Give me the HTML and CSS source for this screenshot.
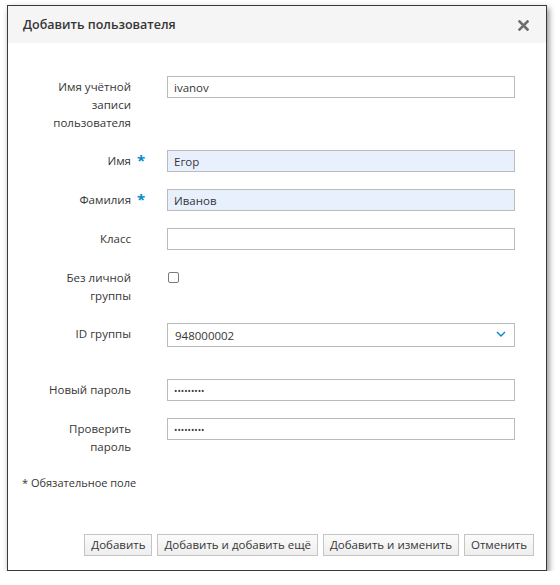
FILE: index.html
```html
<!DOCTYPE html>
<html lang="ru">
<head>
<meta charset="utf-8">
<title>Добавить пользователя</title>
<link rel="stylesheet" href="styles.css">
</head>
<body>
<div class="dialog">
  <div class="dialog-header">
    <span class="dialog-title">Добавить пользователя</span>
    <svg class="close" width="11" height="11" viewBox="0 0 11 11" aria-label="Закрыть">
      <path d="M1.5 1.5 L9.5 9.5 M9.5 1.5 L1.5 9.5" stroke="#6e6e6e" stroke-width="2.6" stroke-linecap="square"/>
    </svg>
  </div>
  <div class="dialog-body">
    <div class="row">
      <div class="label">Имя учётной записи пользователя</div>
      <div class="req"></div>
      <div class="field"><input class="text" type="text" value="ivanov" readonly></div>
    </div>
    <div class="row">
      <div class="label">Имя</div>
      <div class="req">*</div>
      <div class="field"><input class="text filled" type="text" value="Егор" readonly></div>
    </div>
    <div class="row">
      <div class="label">Фамилия</div>
      <div class="req">*</div>
      <div class="field"><input class="text filled" type="text" value="Иванов" readonly></div>
    </div>
    <div class="row">
      <div class="label">Класс</div>
      <div class="req"></div>
      <div class="field"><input class="text" type="text" value="" readonly></div>
    </div>
    <div class="row">
      <div class="label">Без личной группы</div>
      <div class="req"></div>
      <div class="field field-check"><input class="check" type="checkbox"></div>
    </div>
    <div class="row row-spaced">
      <div class="label">ID группы</div>
      <div class="req"></div>
      <div class="field">
        <div class="select">
          <span>948000002</span>
          <svg class="chevron" width="10" height="6" viewBox="0 0 10 6">
            <path d="M1 1 L5 5 L9 1" fill="none" stroke="#0088ce" stroke-width="1.4"/>
          </svg>
        </div>
      </div>
    </div>
    <div class="row">
      <div class="label">Новый пароль</div>
      <div class="req"></div>
      <div class="field"><input class="text pass" type="password" value="123456789" readonly></div>
    </div>
    <div class="row">
      <div class="label">Проверить пароль</div>
      <div class="req"></div>
      <div class="field"><input class="text pass" type="password" value="123456789" readonly></div>
    </div>
    <div class="note">* Обязательное поле</div>
  </div>
  <div class="dialog-footer">
    <button class="btn">Добавить</button>
    <button class="btn">Добавить и добавить ещё</button>
    <button class="btn">Добавить и изменить</button>
    <button class="btn">Отменить</button>
  </div>
</div>
</body>
</html>
```

FILE: styles.css
```css
html, body {
  margin: 0;
  padding: 0;
  background: #ffffff;
}

body {
  font-family: "Open Sans", "Noto Sans", "DejaVu Sans", sans-serif;
  color: #363636;
  padding: 5px 0 0 7px;
}

.dialog {
  box-sizing: border-box;
  width: 540px;
  height: 566px;
  border: 1px solid #3a3a3a;
  background: #fff;
  box-shadow: 2px 3px 6px rgba(0, 0, 0, 0.45);
  display: flex;
  flex-direction: column;
}

.dialog-header {
  height: 37px;
  background: #f5f5f5;
  display: flex;
  align-items: center;
  justify-content: space-between;
  padding: 0 17px 0 15px;
}

.dialog-title {
  font-size: 12.5px;
  font-weight: 600;
  color: #363636;
}

.close {
  display: block;
  margin-top: 2px;
}

.dialog-body {
  padding: 33px 31px 0 0;
}

.row {
  display: flex;
  align-items: flex-start;
  margin-bottom: 17px;
}

.row-spaced {
  margin-bottom: 32px;
}

.label {
  width: 123px;
  flex: none;
  box-sizing: border-box;
  text-align: right;
  font-size: 11.5px;
  line-height: 18px;
  padding: 2px 0 1px 33px;
  color: #363636;
}

.req {
  width: 36px;
  flex: none;
  box-sizing: border-box;
  padding: 1px 0 0 6px;
  color: #0088ce;
  font-size: 15px;
  font-weight: 700;
  line-height: 18px;
}

.field {
  flex: 1;
  display: flex;
}

.text {
  box-sizing: border-box;
  width: 100%;
  height: 22px;
  margin: 0;
  border: 1px solid #bbbbbb;
  border-radius: 0;
  padding: 0 6px;
  font-family: "Open Sans", "Noto Sans", sans-serif;
  font-size: 11.5px;
  color: #363636;
  background: #fff;
  outline: none;
}

.text.filled {
  background: #e8f0fe;
}

.text.pass {
  font-size: 9px;
  letter-spacing: 0;
}

.field-check {
  padding-top: 5px;
}

.check {
  appearance: none;
  -webkit-appearance: none;
  box-sizing: border-box;
  width: 11px;
  height: 11px;
  margin: 0 0 0 1px;
  border: 1px solid #7a7a7a;
  border-radius: 2px;
  background: #fff;
}

.select {
  box-sizing: border-box;
  width: 100%;
  height: 24px;
  border: 1px solid #bbbbbb;
  padding: 0 8px 0 7px;
  display: flex;
  align-items: center;
  justify-content: space-between;
  font-size: 11.5px;
  color: #363636;
}

.chevron {
  display: block;
  margin-top: -2px;
}

.note {
  margin-left: 14px;
  font-size: 11px;
  line-height: 18px;
  color: #363636;
}

.dialog-footer {
  margin-top: auto;
  display: flex;
  justify-content: flex-end;
  gap: 5px;
  padding: 0 12px 14px 0;
}

.btn {
  box-sizing: border-box;
  height: 22px;
  margin: 0;
  padding: 0 6px;
  border: 1px solid #c4c4c4;
  border-radius: 0;
  background: linear-gradient(#fbfbfb, #eeeeee);
  font-family: "Open Sans", "Noto Sans", sans-serif;
  font-size: 11.5px;
  color: #363636;
  line-height: 20px;
}
```
